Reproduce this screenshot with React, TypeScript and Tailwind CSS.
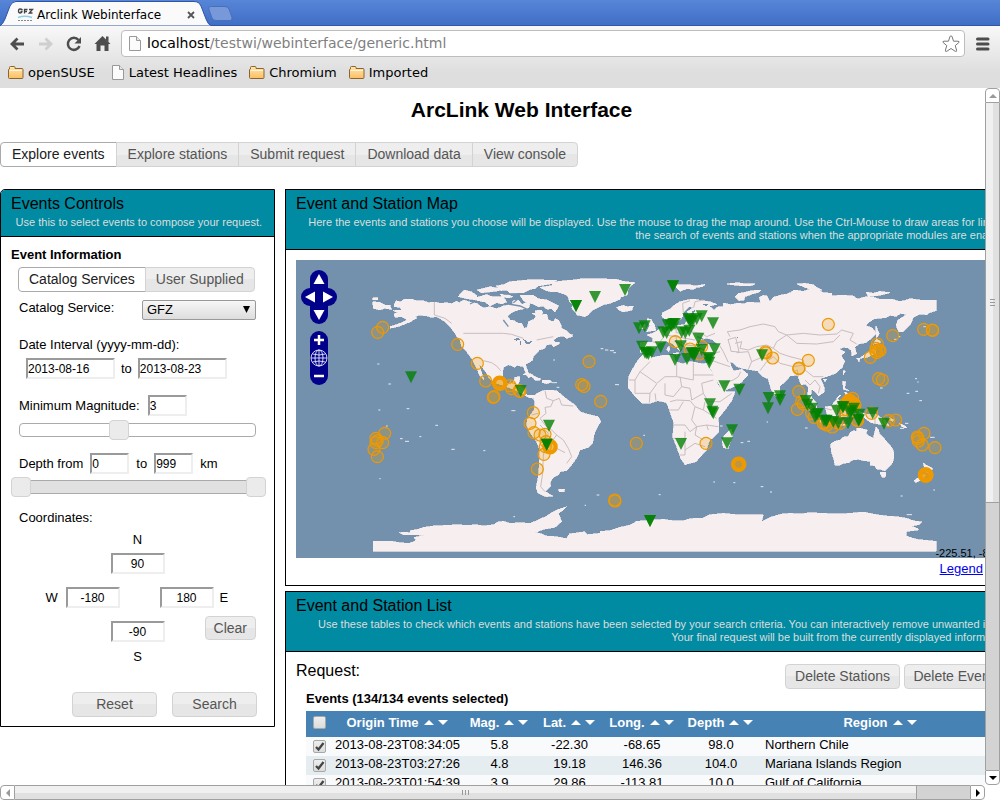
import { useState } from "react";
import type { ReactNode } from "react";

const softButton =
  "border border-[#d3d3d3] bg-linear-to-b from-[#eeeeee] from-50% to-[#e6e6e6] to-50% text-[#555555]";
const textBox =
  "h-[21px] border-2 border-t-[#9a9a9a] border-l-[#9a9a9a] border-r-[#eeeeee] border-b-[#eeeeee] bg-white text-[12px] text-black outline-none";

/* ---------- browser window ---------- */

function FolderIcon() {
  return (
    <svg width="16" height="14" viewBox="0 0 16 14" aria-hidden="true">
      <defs>
        <linearGradient id="folder" x1="0" y1="0" x2="0" y2="1">
          <stop offset="0" stopColor="#ffe7b0" />
          <stop offset="1" stopColor="#fbbf62" />
        </linearGradient>
      </defs>
      <path
        d="M1.5 12.5 Q.5 12.5 .5 11.5 V3.5 L1.5 3 V1.5 Q1.5 .5 2.5 .5 H6 Q7 .5 7 1.5 V2.5 H14 Q15 2.5 15 3.5 V11.5 Q15 12.5 14 12.5 Z"
        fill="url(#folder)"
        stroke="#8a6434"
      />
      <path d="M1.5 4.500 H14" stroke="#fff3d6" />
    </svg>
  );
}

function PageIcon() {
  return (
    <svg width="12" height="15" viewBox="0 0 12 15" aria-hidden="true">
      <path d="M.5 .5 H7.500 L11.500 4.500 V14.500 H.5 Z" fill="#fbfbfb" stroke="#999" />
      <path d="M7.500 .5 V4.500 H11.500" fill="#e8e8e8" stroke="#999" />
    </svg>
  );
}

function TitleBar() {
  return (
    <div className="flex h-[26px] items-end border-b border-[#2f55a4] bg-linear-to-b from-[#5786d8] to-[#3f6ec6]">
      <div className="relative flex h-6 w-[212px] items-center">
        <svg className="absolute inset-0" width="212" height="25" viewBox="0 0 212 25" aria-hidden="true">
          <path
            d="M0 25 Q3 23 5 18 L10 5 Q12 .5 16 .5 H194 Q199 .5 201 5 L206 18 Q208 24 212 25 Z"
            fill="#fafafa"
            stroke="#2f55a4"
          />
        </svg>
        <div className="relative flex flex-1 items-center pt-[3px] pr-[15px] pl-[17px]">
          <svg width="17" height="16" viewBox="0 0 17 16" aria-hidden="true">
            <path
              d="M5.500 3 Q4.500 2 3 2 Q1.500 2 1.500 4 Q1.500 6 3.200 6 Q5 6 5 4.500 H3.500 M7.500 6.500 V2.500 H10.500 M7.500 4.500 H10 M12 2.500 H15.500 L12.300 6 H15.500"
              fill="none"
              stroke="#444"
              strokeWidth="1.300"
            />
            <path d="M1 10.500 Q8 8 15 10.500" fill="none" stroke="#8fd0e8" strokeWidth="1.500" />
            <path d="M1 13.500 H15" stroke="#888" strokeDasharray="2 1" />
          </svg>
          <span className="ml-[3px] flex-1 font-['DejaVu_Sans',sans-serif] text-[12px] text-black">
            Arclink Webinterface
          </span>
          <button type="button" aria-label="Close tab" className="grid size-3 place-items-center">
            <svg width="8" height="8" viewBox="0 0 8 8" aria-hidden="true">
              <path d="M1 1 L7 7 M7 1 L1 7" stroke="#555" strokeWidth="1.800" />
            </svg>
          </button>
        </div>
      </div>
      <button type="button" aria-label="New tab" className="-ml-1 mb-[4px]">
        <svg width="25" height="15" viewBox="0 0 25 15" aria-hidden="true">
          <path
            d="M2.500 .5 H17 Q20 .5 21 3 L24 11.500 Q24.500 14.500 22 14.500 H8 Q5 14.500 4 12 L.8 3 Q.3 .5 2.500 .5 Z"
            fill="#7799d9"
            stroke="#4a6fb9"
          />
        </svg>
      </button>
    </div>
  );
}

function Toolbar() {
  return (
    <div className="bg-linear-to-b from-[#f8f8f8] to-[#dedede] to-75% font-['DejaVu_Sans',sans-serif]">
      <div className="flex h-[35px] items-center pr-[10px] pl-[9px]">
        <button type="button" aria-label="Back">
          <svg width="17" height="16" viewBox="0 0 17 16" aria-hidden="true">
            <path d="M15 8 H3 M8.500 2.500 L3 8 L8.500 13.500" fill="none" stroke="#4d4d4d" strokeWidth="2.800" />
          </svg>
        </button>
        <button type="button" aria-label="Forward" className="ml-3">
          <svg width="16" height="16" viewBox="0 0 16 16" aria-hidden="true">
            <path d="M1 8 H13 M7.500 2.500 L13 8 L7.500 13.500" fill="none" stroke="#cfcfcf" strokeWidth="2.800" />
          </svg>
        </button>
        <button type="button" aria-label="Reload" className="ml-3">
          <svg width="16" height="16" viewBox="0 0 16 16" aria-hidden="true">
            <path d="M12.500 4 A6 6 0 1 0 13.500 10" fill="none" stroke="#4d4d4d" strokeWidth="2.500" />
            <path d="M15 1 V7.500 H8.500 Z" fill="#4d4d4d" />
          </svg>
        </button>
        <button type="button" aria-label="Home" className="ml-3">
          <svg width="17" height="17" viewBox="0 0 17 17" aria-hidden="true">
            <path d="M8.500 1 L16.500 9 H14.500 V16 H10.500 V10.500 H6.500 V16 H2.500 V9 H.5 Z" fill="#4d4d4d" />
            <path d="M12 1.500 H14.500 V7 L12 5 Z" fill="#4d4d4d" />
          </svg>
        </button>
        <div className="ml-[10px] flex h-[27px] flex-1 items-center rounded-[4px] border border-[#bdbdbd] bg-white pr-1 pl-[7px]">
          <PageIcon />
          <a href="#top" className="ml-[6px] flex-1 text-[14px] text-[#808080]">
            <span className="text-black">localhost</span>/testwi/webinterface/generic.html
          </a>
          <button type="button" aria-label="Bookmark this page">
            <svg width="18" height="18" viewBox="0 0 18 18" aria-hidden="true">
              <path
                d="M9 .8 Q9.800 .8 10.200 2 L11.500 6.200 H16 Q17.800 6.500 16.800 7.600 L13.200 10.600 L14.600 15.200 Q14.800 17 13.200 16.300 L9 13.500 L4.800 16.300 Q3.200 17 3.400 15.200 L4.800 10.600 L1.200 7.600 Q.2 6.500 2 6.200 H6.500 L7.800 2 Q8.200 .8 9 .8 Z"
                fill="none"
                stroke="#777"
                strokeLinejoin="round"
              />
            </svg>
          </button>
        </div>
        <button type="button" aria-label="Menu" className="ml-[11px]">
          <svg width="14" height="14" viewBox="0 0 14 14" aria-hidden="true">
            <path d="M1.500 2 H12 M1.500 7 H12 M1.500 12 H12" stroke="#4d4d4d" strokeWidth="3" strokeLinecap="round" />
          </svg>
        </button>
      </div>
      <nav className="flex h-[27px] items-center pb-1 pl-2 text-[13px] text-black">
        <a href="#opensuse" className="flex items-center gap-1">
          <FolderIcon />
          openSUSE
        </a>
        <a href="#headlines" className="ml-[17px] flex items-center gap-[5px]">
          <PageIcon />
          Latest Headlines
        </a>
        <a href="#chromium" className="ml-3 flex items-center gap-1">
          <FolderIcon />
          Chromium
        </a>
        <a href="#imported" className="ml-3 flex items-center gap-1">
          <FolderIcon />
          Imported
        </a>
      </nav>
    </div>
  );
}

function ScrollArrow({ label, d, className, muted }: { label: string; d: string; className: string; muted?: boolean }) {
  return (
    <button
      type="button"
      aria-label={label}
      className={`grid size-[15px] shrink-0 place-items-center border border-[#a0a0a0] bg-white ${className}`}
    >
      <svg width="8" height="8" viewBox="0 0 8 8" aria-hidden="true">
        <path d={d} fill={muted ? "#999" : "#000"} />
      </svg>
    </button>
  );
}

function VerticalScroll() {
  return (
    <div className="flex w-[15px] shrink-0 flex-col">
      <ScrollArrow label="Scroll up" d="M0 6 L4 2 L8 6 Z" className="rounded-t-[4px]" muted />
      <div className="flex-1 border-x border-[#a0a0a0] bg-[#d3d3d3]">
        <div className="grid h-3/5 place-items-center border-b border-[#a0a0a0] bg-linear-to-r from-[#f0f0f0] from-50% to-[#e0e0e0] to-50%">
          <svg width="5" height="7" viewBox="0 0 5 7" aria-hidden="true">
            <path d="M0 .5 H5 M0 3.500 H5 M0 6.500 H5" stroke="#999" />
          </svg>
        </div>
      </div>
      <ScrollArrow label="Scroll down" d="M0 2 L4 6 L8 2 Z" className="rounded-b-[4px]" />
    </div>
  );
}

function HorizontalScroll() {
  return (
    <div className="flex h-[15px] shrink-0 pr-[15px]">
      <ScrollArrow label="Scroll left" d="M6 0 L2 4 L6 8 Z" className="rounded-l-[4px]" muted />
      <div className="flex-1 border-y border-[#a0a0a0] bg-[#d3d3d3]">
        <div className="grid h-full w-[94.5%] place-items-center border-r border-[#a0a0a0] bg-linear-to-b from-[#f0f0f0] from-50% to-[#e0e0e0] to-50%">
          <svg width="7" height="5" viewBox="0 0 7 5" aria-hidden="true">
            <path d="M.5 0 V5 M3.500 0 V5 M6.500 0 V5" stroke="#999" />
          </svg>
        </div>
      </div>
      <ScrollArrow label="Scroll right" d="M2 0 L6 4 L2 8 Z" className="rounded-r-[4px]" />
    </div>
  );
}

/* ---------- shared pieces ---------- */

function PanelHeader({ title, children, className }: { title: string; children: ReactNode; className: string }) {
  return (
    <header className={`border-b border-black bg-[#008ba2] px-[10px] pt-[5px] ${className}`}>
      <h2 className="text-[16px] leading-[18px] text-black">{title}</h2>
      <p className="pt-[3px] pr-[2px] text-right text-[11px] leading-[13px] text-[#dddddd]">{children}</p>
    </header>
  );
}

function Segmented({ items, name, itemClass }: { items: string[]; name: string; itemClass: string }) {
  const [active, setActive] = useState(0);
  return (
    <div role="tablist" aria-label={name} className="flex text-[14px] leading-[23px]">
      {items.map((item, i) => (
        <button
          key={item}
          type="button"
          role="tab"
          aria-selected={i === active}
          onClick={() => setActive(i)}
          className={`-mr-px whitespace-nowrap first:rounded-l-[4px] last:rounded-r-[4px] ${itemClass} ${
            i === active ? "border border-[#aaaaaa] bg-white text-[#212121]" : softButton
          }`}
        >
          {item}
        </button>
      ))}
    </div>
  );
}

/* ---------- events controls ---------- */

const thumbClasses =
  "[&::-webkit-slider-thumb]:appearance-none [&::-webkit-slider-thumb]:size-5 [&::-webkit-slider-thumb]:rounded-[4px] [&::-webkit-slider-thumb]:border [&::-webkit-slider-thumb]:border-[#d3d3d3] [&::-webkit-slider-thumb]:bg-[#ebebeb]";

function EventsControls() {
  return (
    <section className="w-[275px] shrink-0 rounded-tl-[5px] border border-black bg-white">
      <PanelHeader title="Events Controls" className="h-[47px] rounded-tl-[4px]">
        Use this to select events to compose your request.
      </PanelHeader>
      <form className="px-[10px] pt-[10px] pb-[9px] text-[13px] leading-4" onSubmit={(e) => e.preventDefault()}>
        <h3 className="font-bold">Event Information</h3>
        <div className="pt-1 pl-[7px]">
          <Segmented name="Event source" items={["Catalog Services", "User Supplied"]} itemClass="px-[10px]" />
        </div>
        <div className="flex justify-between pt-[8px] pr-2 pl-2">
          <label htmlFor="catalog">Catalog Service:</label>
          <div className="relative">
            <select
              id="catalog"
              className="h-5 w-[114px] appearance-none rounded-[2px] border border-[#999999] bg-linear-to-b from-[#f8f8f8] to-[#dddddd] px-1 text-[13px] text-black"
            >
              <option>GFZ</option>
            </select>
            <svg className="pointer-events-none absolute top-[6px] right-[6px]" width="7" height="7" viewBox="0 0 7 7" aria-hidden="true">
              <path d="M0 0 H7 L3.500 7 Z" fill="#000" />
            </svg>
          </div>
        </div>
        <div className="pt-[17px] pl-2">
          <label htmlFor="from">Date Interval (yyyy-mm-dd):</label>
        </div>
        <div className="flex items-center gap-[6px] pt-[5px] pl-[15px]">
          <input id="from" className={`${textBox} w-[89px]`} defaultValue="2013-08-16" />
          <label htmlFor="until">to</label>
          <input id="until" className={`${textBox} w-[89px]`} defaultValue="2013-08-23" />
        </div>
        <div className="flex items-center gap-2 pt-4 pl-2">
          <label htmlFor="magnitude">Minimum Magnitude:</label>
          <input id="magnitude" className={`${textBox} w-[39px]`} defaultValue="3" />
        </div>
        <div className="flex pt-1 pr-2 pl-2">
          <input
            type="range"
            aria-label="Minimum magnitude"
            defaultValue={41.5}
            step={0.5}
            className={`h-5 w-full appearance-none bg-transparent [&::-webkit-slider-runnable-track]:h-[14px] [&::-webkit-slider-runnable-track]:rounded-[4px] [&::-webkit-slider-runnable-track]:border [&::-webkit-slider-runnable-track]:border-[#aaaaaa] [&::-webkit-slider-thumb]:-mt-1 ${thumbClasses}`}
          />
        </div>
        <div className="flex items-center gap-[7px] pt-[13px] pl-2">
          <label htmlFor="depthFrom">Depth from</label>
          <input id="depthFrom" className={`${textBox} w-[39px]`} defaultValue="0" />
          <label htmlFor="depthTo">to</label>
          <input id="depthTo" className={`${textBox} w-[39px]`} defaultValue="999" />
          <span>km</span>
        </div>
        <div className="-mr-[2px] grid items-center pt-[3px]">
          <div className="col-start-1 row-start-1 mx-2 h-[14px] border border-[#aaaaaa] bg-[#e1e1e1]" />
          <input
            type="range"
            aria-label="Lowest depth"
            defaultValue={0}
            className={`pointer-events-none col-start-1 row-start-1 h-5 w-full appearance-none bg-transparent [&::-webkit-slider-thumb]:pointer-events-auto ${thumbClasses}`}
          />
          <input
            type="range"
            aria-label="Greatest depth"
            defaultValue={100}
            className={`pointer-events-none col-start-1 row-start-1 h-5 w-full appearance-none bg-transparent [&::-webkit-slider-thumb]:pointer-events-auto ${thumbClasses}`}
          />
        </div>
        <p className="pt-[13px] pl-2">Coordinates:</p>
        <div className="flex flex-col items-center gap-[5px] pt-[6px]">
          <label htmlFor="north">N</label>
          <input id="north" className={`${textBox} w-[54px] text-center`} defaultValue="90" />
        </div>
        <div className="flex items-center justify-center gap-[6px] py-[13px] pl-1">
          <label htmlFor="west" className="w-[14px]">
            W
          </label>
          <input id="west" className={`${textBox} mr-[34px] w-[54px] text-center`} defaultValue="-180" />
          <input id="east" className={`${textBox} w-[54px] text-center`} defaultValue="180" />
          <label htmlFor="east" className="w-[14px]">
            E
          </label>
        </div>
        <div className="grid grid-cols-[1fr_54px_1fr] items-start">
          <div className="col-start-2 flex flex-col items-center gap-[7px]">
            <input id="south" aria-label="South" className={`${textBox} w-[54px] text-center`} defaultValue="-90" />
            <label htmlFor="south">S</label>
          </div>
          <button
            type="button"
            className={`-mt-[5px] mr-2 justify-self-end rounded-[4px] px-2 text-[14px] leading-[22px] ${softButton}`}
          >
            Clear
          </button>
        </div>
        <div className="flex justify-end gap-[15px] pt-[27px] pr-[7px] text-[14px] leading-[23px]">
          <button type="reset" className={`w-[85px] rounded-[4px] ${softButton}`}>
            Reset
          </button>
          <button type="submit" className={`w-[85px] rounded-[4px] ${softButton}`}>
            Search
          </button>
        </div>
      </form>
    </section>
  );
}

/* ---------- map ---------- */

const land = [
  // North America
  "312,375 318,362 330,366 345,357 365,357 378,362 400,362 415,368 433,366 452,370 470,368 484,371 500,364 508,368 520,360 540,366 560,370 580,384 600,380 620,386 640,378 668,372 668,362 685,360 696,374 708,368 720,372 715,385 690,388 668,396 652,408 660,420 672,422 684,430 695,430 703,445 712,442 715,425 732,418 738,408 726,400 745,398 756,404 770,402 775,420 790,425 796,416 805,420 812,432 815,445 830,452 836,460 848,465 846,470 830,475 820,468 805,470 790,480 796,486 808,486 808,492 790,500 784,492 770,495 765,505 748,510 740,520 730,530 728,540 720,546 706,554 714,575 722,590 716,594 706,575 700,560 680,556 676,562 655,554 640,562 638,580 640,602 652,612 668,610 675,592 690,590 688,605 680,618 700,620 705,640 712,645 735,645 730,655 715,652 695,640 680,632 655,622 635,615 615,608 598,595 590,580 575,560 566,552 574,575 582,600 570,588 560,565 548,540 530,515 515,500 510,480 500,470 495,460 480,440 465,425 440,410 425,412 410,408 390,405 375,410 382,414 355,428 330,438 300,445 300,440 325,432 352,420 335,410 315,412 312,402 324,398 310,392 335,390 330,382 312,380",
  "505,350 512,340 524,330 545,336 560,346 560,354 540,358",
  "545,358 560,352 590,344 606,350 640,350 650,366 634,372 620,368 600,378 585,366",
  "560,330 600,320 630,326 628,332 600,336 575,338",
  "630,342 655,344 668,350 655,354 636,350",
  "618,318 640,314 660,305 720,299 800,301 780,312 745,318 735,326 720,328 700,338 660,340 650,330 632,332",
  "690,345 730,346 745,356 770,360 806,378 795,396 784,386 770,388 760,378 745,380 728,372 712,368 700,362",
  "735,392 755,390 760,400 740,402",
  // Greenland and Iceland
  "750,322 790,316 780,308 815,303 850,300 870,297 920,296 980,298 1000,304 1035,308 1020,320 1014,330 1012,345 990,352 990,358 960,370 940,374 920,385 905,392 895,405 885,410 862,405 855,395 845,385 848,375 838,365 836,355 830,345 815,340 800,335 785,336 770,332",
  "980,382 1000,376 1012,380 1030,378 1026,390 1000,396 986,390",
  "248,365 270,367 284,375 300,376 305,388 285,385 270,390 250,385",
  "248,353 263,353 263,359 248,359",
  // South America
  "728,650 745,638 765,630 800,632 815,645 840,665 855,675 870,695 890,702 925,710 932,725 920,745 912,765 908,790 895,802 870,810 862,830 845,855 830,872 810,875 805,885 790,892 780,908 782,918 765,935 790,948 768,950 745,940 738,925 745,890 748,850 750,810 740,785 725,765 710,735 712,718 722,705 732,690 735,665",
  "806,928 824,928 822,936 808,935",
  "698,584 710,578 725,583 738,592 752,596 750,601 735,601 728,592 715,586",
  "757,600 780,600 785,606 770,611 757,608",
  // Africa
  "1062,522 1090,532 1120,526 1150,526 1157,545 1180,552 1192,545 1210,546 1240,552 1254,548 1262,570 1276,592 1282,612 1300,634 1335,636 1325,662 1305,690 1285,715 1287,756 1258,783 1248,812 1218,845 1185,854 1172,835 1160,800 1148,770 1152,730 1138,690 1130,668 1104,662 1080,670 1056,670 1036,650 1014,622 1016,590 1034,556 1048,535",
  "1323,746 1328,765 1314,807 1300,803 1297,785 1302,768",
  // Eurasia
  "1051,516 1051,488 1089,486 1088,474 1070,465 1088,460 1103,451 1112,446 1131,437 1131,423 1145,420 1140,434 1159,437 1182,434 1192,423 1206,418 1206,411 1234,409 1197,409 1192,394 1211,383 1197,380 1180,397 1178,409 1168,423 1157,432 1145,413 1126,418 1115,409 1117,399 1140,387 1152,376 1168,366 1190,360 1211,357 1239,362 1262,366 1281,373 1258,378 1272,390 1284,380 1300,380 1300,369 1322,374 1347,369 1360,372 1375,366 1412,369 1408,352 1420,346 1431,348 1440,365 1450,352 1473,345 1490,342 1501,338 1512,330 1540,334 1560,327 1581,327 1600,338 1625,340 1625,348 1655,345 1689,348 1703,357 1730,350 1750,352 1770,358 1806,357 1826,364 1844,362 1860,356 1891,360 1938,360 1938,392 1918,398 1910,404 1890,402 1870,412 1862,432 1840,455 1827,456 1818,436 1824,420 1850,404 1832,400 1818,409 1800,406 1787,413 1755,416 1740,424 1727,436 1748,445 1758,460 1745,475 1727,488 1707,492 1694,502 1700,521 1686,528 1684,512 1675,504 1661,502 1647,507 1666,516 1654,526 1664,545 1656,563 1637,580 1609,590 1591,596 1602,620 1603,636 1586,648 1578,638 1565,627 1562,648 1579,668 1581,684 1565,667 1553,648 1555,622 1545,612 1534,615 1523,586 1502,587 1488,602 1469,620 1469,640 1457,652 1443,626 1434,596 1417,589 1403,573 1361,566 1340,560 1328,547 1319,547 1330,573 1356,568 1375,584 1351,610 1305,632 1295,629 1276,592 1258,559 1254,545 1262,523 1234,519 1220,516 1215,502 1230,498 1258,493 1286,495 1267,479 1248,474 1225,484 1220,500 1201,500 1205,516 1187,502 1159,479 1152,484 1178,502 1168,512 1150,493 1131,484 1108,488 1094,507 1070,521",
  "1070,455 1098,451 1094,437 1084,418 1070,416 1079,437",
  "1047,446 1065,446 1065,432 1051,435",
  "1130,508 1137,498 1140,508 1136,516",
  "1148,520 1166,518 1160,526",
  "1155,318 1165,314 1200,314 1215,318 1246,313 1238,320 1220,322 1210,328 1190,326 1170,334",
  "1335,350 1345,340 1360,338 1385,332 1414,330 1408,336 1390,341 1365,350 1362,360 1346,362 1340,356",
  "1310,312 1325,310 1345,308 1365,312 1395,311 1390,316 1365,318 1340,316",
  "1520,312 1545,310 1570,314 1580,322 1596,330 1575,330 1555,326",
  "1728,336 1750,340 1770,334 1800,338 1770,346 1735,350",
  "1750,493 1774,486 1759,477",
  "1755,498 1757,521 1731,532 1708,535 1731,519 1746,508",
  "1700,535 1709,535 1708,546",
  "1757,437 1768,460 1759,476 1757,455",
  "1661,571 1666,573 1659,586",
  "1600,598 1610,598 1605,606",
  "1658,603 1667,606 1664,624 1677,632 1660,628",
  "1665,657 1684,646 1686,664 1674,664",
  "1664,636 1672,640 1668,646",
  "1640,654 1650,644 1652,647 1642,657",
  "1605,681 1622,678 1642,657 1654,667 1645,690 1637,709 1612,704",
  "1539,664 1553,671 1575,688 1593,706 1588,718 1562,695",
  "1586,720 1628,726 1628,731 1591,727",
  "1640,732 1668,732 1674,736 1640,736",
  "1654,713 1654,688 1680,683 1663,690 1672,709",
  "1708,695 1727,702 1755,702 1783,718 1797,737 1764,732 1741,727 1717,709",
  "1798,712 1812,720 1808,724 1796,718",
  "1828,730 1846,738 1850,744 1838,742",
  "1469,648 1476,657 1470,662",
  // Australia and New Zealand
  "1622,792 1634,784 1650,780 1662,770 1675,770 1680,758 1690,752 1700,754 1700,744 1712,745 1732,750 1728,760 1736,768 1750,775 1758,740 1766,750 1768,762 1778,770 1790,785 1802,798 1810,810 1812,830 1808,848 1798,860 1785,873 1772,868 1760,868 1755,858 1740,855 1740,844 1720,842 1705,838 1690,840 1675,848 1660,850 1650,855 1635,855 1632,840 1624,815",
  "1770,877 1788,877 1786,892 1776,892",
  "1900,850 1914,858 1928,866 1918,882 1908,876",
  "1900,882 1908,886 1892,900 1878,908 1872,902",
  // Antarctica
  "249,1084 305,1084 330,1088 355,1090 370,1086 378,1080 372,1072 405,1066 370,1064 340,1064 328,1058 350,1056 362,1060 360,1052 385,1048 400,1042 430,1038 470,1036 500,1034 530,1036 560,1034 580,1038 610,1034 625,1026 640,1024 660,1030 690,1028 720,1030 745,1020 770,1008 785,998 800,990 830,980 820,990 805,1000 810,1012 815,1025 795,1042 760,1048 735,1058 750,1060 770,1068 800,1070 830,1076 838,1062 850,1060 885,1055 890,1064 930,1060 930,1054 960,1052 990,1042 1020,1035 1040,1024 1060,1022 1120,1018 1150,1022 1180,1022 1200,1016 1240,1014 1260,1004 1300,1000 1340,1004 1420,1005 1415,1025 1440,1012 1475,1002 1500,1000 1530,1002 1560,998 1600,1000 1640,1002 1680,1000 1720,996 1760,1004 1790,1008 1820,1010 1850,1015 1870,1022 1895,1026 1888,1034 1862,1038 1885,1046 1885,1050 1850,1054 1848,1068 1880,1078 1938,1084 1938,1113 249,1113",
];

const inlandWater = [
  "1236,372 1256,372 1250,378",
  "1205,396 1215,388 1212,404",
  "672,478 684,474 690,480 680,482",
  "690,484 694,484 694,494 690,494",
  "700,478 715,486 728,482 718,494 708,490",
  "1340,470 1346,470 1344,478",
];

const channels =
  "M640,342L690,342 M560,362L540,372 M655,372L690,378L720,392 M590,340L630,338 M690,352L670,368 M745,340L760,352 M640,420L655,440 M1222,470L1240,478";

const islets = [
  "M262,552h6 M932,506h8 M945,510h10 M960,512h12 M970,518h8 M790,540h5 M295,612h8 M350,686h8 M265,690h6 M330,776h8 M345,784h12 M388,770h6 M436,736h8 M484,808h10 M580,812h6 M664,692h12 M288,738h5 M268,896h4 M920,945h8 M884,976h4 M670,1010h5 M785,608h16 M800,622h8 M975,614h12 M1060,766h5",
  "M1876,634h8 M1850,640h8 M1888,662h8 M1830,745h12 M1845,730h10 M1920,772h14 M1352,788h8 M1372,784h8 M1412,920h8 M1440,936h6 M1270,906h5 M1330,908h6 M1106,944h6 M1832,948h6 M1930,930h5 M1850,1004h16 M1812,478h8 M1825,470h6 M1900,440h8 M1875,596h6 M1882,606h4 M1770,624h8 M1430,726h4 M1290,738h8 M1545,744h8",
];

const borders =
  "M433,366V405L465,415L485,430 M520,460H640L665,463L700,475 M740,480L765,475L790,470 M580,542L605,548L620,558L632,572 M655,612L665,600 M765,632L770,655L790,662L782,680L765,682L768,700L750,715L765,735L785,750L800,765L820,780L835,805L845,830L830,850 M790,662L808,655L815,675L850,678 M725,705L745,700 M750,735L775,760L765,790L760,830L758,880L752,920L765,935 M800,765L785,785L800,805L825,818 M1016,600H1035L1050,575L1080,545 M1050,575L1100,610L1125,590L1160,590V548 M1160,590L1210,600V548 M1210,585H1270 M1035,600V640L1080,640L1100,612 M1080,640L1078,668 M1095,640L1098,662 M1125,610V645L1150,650L1175,620L1170,590 M1175,620L1200,625L1205,660L1240,640L1235,610L1270,600 M1140,665L1160,660L1200,662 M1138,690H1165L1180,665 M1150,735H1185L1200,755L1220,740L1205,720L1215,680L1200,662 M1215,680L1240,690L1280,715 M1240,640L1255,665L1290,665L1325,640 M1240,690L1245,665 M1220,740L1250,735L1255,750 M1220,740L1215,765L1240,780 M1150,775H1185V755 M1185,775V810L1215,790L1245,800 M1168,825L1185,825V810 M1250,735L1285,740 M1180,397L1178,370L1200,362 M1211,383L1215,365L1240,360 M1206,411L1215,435L1200,455L1235,460L1250,470L1275,460 M1160,437L1158,458L1190,462L1200,445 M1112,446L1125,465L1110,486 M1125,465L1158,470L1185,475L1215,480 M1158,470L1160,480 M1185,475L1190,495L1215,498 M1050,500L1060,488 M1089,486L1108,490 M1320,470L1312,455L1350,450L1380,440L1420,432L1455,440L1465,455L1490,465L1540,460L1590,465L1640,462L1655,450L1690,460L1680,480L1700,492 M1490,465L1520,490L1580,492L1630,485L1650,465 M1490,465L1460,485L1450,505L1470,520L1500,530L1540,540L1545,570L1570,590L1600,590 M1335,490L1355,485L1350,505L1375,510L1400,500L1430,495L1450,505 M1340,518L1375,515L1385,545L1375,568 M1385,545L1420,530L1440,520 M1410,572L1430,545L1450,530L1470,550L1510,560L1540,555 M1510,575L1522,570L1525,590 M1545,600L1560,615L1575,600L1590,620L1585,640 M1290,498L1300,515L1315,547 M1262,523L1290,515 M1262,540L1290,550L1320,560 M1300,610L1330,600L1345,590L1352,575 M1605,685L1625,690L1645,668 M1755,702V730 M1314,479L1337,472L1342,493L1347,516L1323,514L1320,498Z";

type Point = [number, number];

const events: Point[] = [
  [263, 457], [278, 442], [503, 493], [562, 550], [897, 545], [587, 603], [610, 652], [612, 650], [660, 617],
  [665, 626], [687, 632], [690, 634], [875, 614], [882, 619], [932, 664], [730, 698], [720, 730], [732, 758],
  [750, 765], [765, 763], [768, 785], [762, 823], [766, 800], [742, 867], [284, 760], [258, 775], [262, 782],
  [278, 788], [252, 808], [262, 830], [258, 788], [975, 963], [974, 960], [1039, 790], [1615, 433], [1156, 485],
  [1200, 507], [1228, 522], [1235, 500], [1426, 516], [1428, 519], [1448, 534], [1555, 541], [1526, 566],
  [1527, 564], [1808, 467], [1901, 448], [1928, 451], [1927, 450], [1762, 492], [1758, 505], [1766, 512],
  [1757, 514], [1770, 512], [1760, 518], [1741, 532], [1766, 596], [1777, 600], [1526, 635], [1522, 688],
  [1535, 665], [1540, 672], [1565, 700], [1572, 712], [1600, 730], [1610, 735], [1627, 741], [1605, 728],
  [1640, 728], [1650, 730], [1703, 722], [1701, 720], [1745, 700], [1796, 722], [1817, 720], [1902, 760],
  [1882, 771], [1885, 783], [1884, 775], [1897, 795], [1935, 803], [1248, 790], [1688, 655], [1665, 672],
  [1670, 690], [1695, 675], [1660, 690],
];

const strongEvents: Point[] = [
  [629, 610], [780, 800], [1346, 853], [1907, 885], [1907, 885], [1678, 664], [1688, 672],
];

const stations: Point[] = [
  [858, 376], [858, 376], [915, 349], [1005, 328], [363, 590], [692, 631], [777, 735], [770, 792], [770, 792],
  [1149, 317], [1149, 317],
  // Europe
  [1047, 443], [1064, 437], [1120, 455], [1130, 457], [1133, 434], [1142, 434], [1150, 430], [1155, 430],
  [1175, 455], [1186, 457], [1198, 450], [1195, 415], [1202, 425], [1208, 420], [1200, 419], [1220, 415],
  [1235, 407], [1269, 428], [1225, 474], [1056, 498], [1065, 516], [1075, 520], [1085, 515], [1070, 518],
  [1112, 500], [1155, 538], [1191, 535], [1172, 497], [1205, 517], [1215, 519], [1212, 525], [1208, 520],
  [1235, 508], [1255, 532], [1258, 546], [1258, 536], [1274, 506], [1145, 436],
  [1416, 524], [1303, 617], [1348, 627], [1260, 671], [1267, 693], [1270, 698], [1326, 749], [1311, 788],
  [1173, 790], [1080, 1021], [1080, 1021], [1436, 652], [1470, 647], [1470, 658], [1434, 683],
  // Indonesia and the Pacific
  [1547, 661], [1552, 672], [1566, 684], [1580, 702], [1584, 700], [1602, 720], [1610, 720], [1608, 722],
  [1630, 724], [1645, 728], [1674, 728], [1706, 720], [1708, 702], [1692, 684], [1684, 692], [1658, 680],
  [1640, 690], [1660, 679], [1748, 698], [1782, 729], [1575, 708], [1706, 718], [1680, 698],
];

function WorldMap() {
  return (
    <svg className="block h-[298px] w-full" viewBox="18 240 2154 894" preserveAspectRatio="xMinYMin meet" role="img" aria-label="World map of events and stations">
      <g fill="#f6eeef" stroke="#f6eeef" strokeWidth="2" shapeRendering="crispEdges">
        {land.map((points) => (
          <polygon key={points} points={points} />
        ))}
      </g>
      <g fill="#7391ad" shapeRendering="crispEdges">
        {inlandWater.map((points) => (
          <polygon key={points} points={points} />
        ))}
      </g>
      <path d={channels} fill="none" stroke="#7391ad" strokeWidth="4" />
      <g stroke="#e8ecf2" strokeWidth="3">
        {islets.map((d) => (
          <path key={d} d={d} />
        ))}
      </g>
      <path d={borders} fill="none" stroke="#c9bdbf" strokeWidth="3" />
      <g fill="#ee9900" fillOpacity="0.22" stroke="#ee9900" strokeWidth="3.500">
        {events.map(([x, y], i) => (
          <circle key={i} cx={x} cy={y} r="18" />
        ))}
      </g>
      <g fill="#ee9900" fillOpacity="0.6" stroke="#ee9900" strokeWidth="13">
        {strongEvents.map(([x, y], i) => (
          <circle key={i} cx={x} cy={y} r="17" />
        ))}
      </g>
      <g fill="#008000" fillOpacity="0.78">
        {stations.map(([x, y], i) => (
          <path key={i} d={`M${x - 18},${y - 16}h36l-18,36z`} />
        ))}
      </g>
    </svg>
  );
}

function MapControls() {
  const key = "grid size-[18px] place-items-center bg-[#00008b]";
  return (
    <div className="absolute top-[10px] left-[5px] flex flex-col items-center">
      <button type="button" aria-label="Pan north" className={`${key} rounded-t-full`}>
        <svg width="12" height="12" viewBox="0 0 12 12" aria-hidden="true">
          <path d="M6 1 L11.500 11 H.5 Z" fill="#fff" />
        </svg>
      </button>
      <div className="flex">
        <button type="button" aria-label="Pan west" className={`${key} rounded-l-full`}>
          <svg width="12" height="12" viewBox="0 0 12 12" aria-hidden="true">
            <path d="M1 6 L11 .5 V11.500 Z" fill="#fff" />
          </svg>
        </button>
        <button type="button" aria-label="Pan east" className={`${key} rounded-r-full`}>
          <svg width="12" height="12" viewBox="0 0 12 12" aria-hidden="true">
            <path d="M11 6 L1 .5 V11.500 Z" fill="#fff" />
          </svg>
        </button>
      </div>
      <button type="button" aria-label="Pan south" className={`${key} rounded-b-full`}>
        <svg width="12" height="12" viewBox="0 0 12 12" aria-hidden="true">
          <path d="M6 11 L.5 1 H11.500 Z" fill="#fff" />
        </svg>
      </button>
      <button type="button" aria-label="Zoom in" className={`${key} mt-[7px] rounded-t-full`}>
        <svg width="12" height="12" viewBox="0 0 12 12" aria-hidden="true">
          <path d="M6 1 V11 M1 6 H11" stroke="#fff" strokeWidth="2.500" />
        </svg>
      </button>
      <button type="button" aria-label="Zoom to world" className={key}>
        <svg width="18" height="18" viewBox="0 0 18 18" aria-hidden="true">
          <g fill="none" stroke="#e8e8f8" strokeWidth=".9">
            <circle cx="9" cy="9" r="8" />
            <ellipse cx="9" cy="9" rx="4" ry="8" />
            <path d="M9 1 V17 M1 9 H17 M2.500 5 Q9 7 15.500 5 M2.500 13 Q9 11 15.500 13" />
          </g>
        </svg>
      </button>
      <button type="button" aria-label="Zoom out" className={`${key} rounded-b-full`}>
        <svg width="12" height="12" viewBox="0 0 12 12" aria-hidden="true">
          <path d="M1 6 H11" stroke="#fff" strokeWidth="2.500" />
        </svg>
      </button>
    </div>
  );
}

function MapPanel() {
  return (
    <section className="border border-black bg-white">
      <PanelHeader title="Event and Station Map" className="h-[60px]">
        Here the events and stations you choose will be displayed. Use the mouse to drag the map around. Use the
        Ctrl-Mouse to draw areas for limiting
        <br />
        the search of events and stations when the appropriate modules are enabled.
      </PanelHeader>
      <div className="px-[10px] pt-[10px] pb-[9px]">
        <div className="relative bg-[#7391ad]">
          <WorldMap />
          <MapControls />
          <span className="absolute right-1 bottom-[-2px] text-[11px] leading-[13px] text-black">-225.51, -88.37</span>
        </div>
        <p className="pt-[3px] pr-[31px] text-right text-[13px] leading-[15px]">
          <a href="#legend" className="text-[#0000ee] underline">
            Legend
          </a>
        </p>
      </div>
    </section>
  );
}

/* ---------- event list ---------- */

const rows = [
  ["2013-08-23T08:34:05", "5.8", "-22.30", "-68.65", "98.0", "Northern Chile"],
  ["2013-08-23T03:27:26", "4.8", "19.18", "146.36", "104.0", "Mariana Islands Region"],
  ["2013-08-23T01:54:39", "3.9", "29.86", "-113.81", "10.0", "Gulf of California"],
];

const columns = ["Origin Time", "Mag.", "Lat.", "Long.", "Depth", "Region"];

function Tick({ label, checked }: { label: string; checked?: boolean }) {
  return (
    <span className="grid size-[13px]">
      <input
        type="checkbox"
        aria-label={label}
        defaultChecked={checked}
        className="peer col-start-1 row-start-1 size-[13px] appearance-none rounded-[2px] border border-[#a8a8a8] bg-linear-to-b from-[#eeeeee] to-[#dcdcdc]"
      />
      <svg
        className="pointer-events-none invisible col-start-1 row-start-1 peer-checked:visible"
        width="13"
        height="13"
        viewBox="0 0 13 13"
        aria-hidden="true"
      >
        <path d="M3 7 L5.500 9.500 L10.500 3" fill="none" stroke="#444" strokeWidth="2.300" />
      </svg>
    </span>
  );
}

function SortArrows({ column }: { column: string }) {
  return (
    <span className="ml-[5px] inline-flex gap-1 align-middle">
      <button type="button" aria-label={`Sort ${column} ascending`}>
        <svg className="block" width="10" height="11" viewBox="0 0 10 11" aria-hidden="true">
          <path d="M0 7 L5 2 L10 7 Z" fill="#fff" />
        </svg>
      </button>
      <button type="button" aria-label={`Sort ${column} descending`}>
        <svg className="block" width="10" height="11" viewBox="0 0 10 11" aria-hidden="true">
          <path d="M0 2 H10 L5 7 Z" fill="#fff" />
        </svg>
      </button>
    </span>
  );
}

function ListPanel() {
  return (
    <section className="border border-black bg-white">
      <PanelHeader title="Event and Station List" className="h-[60px]">
        Use these tables to check which events and stations have been selected by your search criteria. You can
        interactively remove unwanted items.
        <br />
        Your final request will be built from the currently displayed information.
      </PanelHeader>
      <div className="px-[10px] pt-3 pb-10">
        <div className="flex items-start justify-between">
          <h3 className="text-[16px] leading-[14px]">Request:</h3>
          <div className="flex gap-1 pr-1 text-[14px] leading-[23px]">
            <button type="button" className={`w-[115px] rounded-[4px] ${softButton}`}>
              Delete Stations
            </button>
            <button type="button" className={`w-[106px] rounded-[4px] ${softButton}`}>
              Delete Events
            </button>
          </div>
        </div>
        <div className="pt-[2px] pr-[14px] pl-[10px] text-[13px]">
          <h4 className="pb-[4px] leading-4 font-bold">Events (134/134 events selected)</h4>
          <table className="w-full table-fixed border-collapse">
            <colgroup>
              <col className="w-[26px]" />
              <col className="w-[131px]" />
              <col className="w-[73px]" />
              <col className="w-[67px]" />
              <col className="w-[78px]" />
              <col className="w-[80px]" />
              <col />
            </colgroup>
            <thead>
              <tr className="h-[26px] bg-[#4682b4] text-white">
                <th className="pb-1 pl-[7px]">
                  <Tick label="Select all events" />
                </th>
                {columns.map((column) => (
                  <th key={column} className="pr-px pb-[2px] leading-4 font-bold whitespace-nowrap">
                    {column}
                    <SortArrows column={column} />
                  </th>
                ))}
              </tr>
            </thead>
            <tbody>
              {rows.map((row) => (
                <tr key={row[0]} className="h-[19px] odd:bg-[#f9fafc] even:bg-[#e6edf1]">
                  <td className="pl-[7px]">
                    <Tick label={`Select ${row[0]}`} checked />
                  </td>
                  {row.map((cell, i) => (
                    <td key={i} className="pb-[3px] text-center leading-4 whitespace-nowrap last:pl-1 last:text-left">
                      {cell}
                    </td>
                  ))}
                </tr>
              ))}
            </tbody>
          </table>
        </div>
      </div>
    </section>
  );
}

export default function App() {
  return (
    <div className="flex h-screen flex-col overflow-hidden bg-white">
      <TitleBar />
      <Toolbar />
      <div className="flex min-h-0 flex-1">
        <main className="min-w-0 flex-1 overflow-hidden font-['Liberation_Sans',Arial,sans-serif] text-black">
          <div className="min-w-[1043px]">
            <h1 className="pt-2 text-center text-[21px] leading-7 font-bold">ArcLink Web Interface</h1>
            <div className="pt-[18px]">
              <Segmented
                name="Sections"
                items={["Explore events", "Explore stations", "Submit request", "Download data", "View console"]}
                itemClass="px-[11px]"
              />
            </div>
            <div className="flex items-start gap-[10px] pt-[22px] pr-[18px]">
              <EventsControls />
              <div className="flex min-w-0 flex-1 flex-col gap-[5px]">
                <MapPanel />
                <ListPanel />
              </div>
            </div>
          </div>
        </main>
        <VerticalScroll />
      </div>
      <HorizontalScroll />
    </div>
  );
}
